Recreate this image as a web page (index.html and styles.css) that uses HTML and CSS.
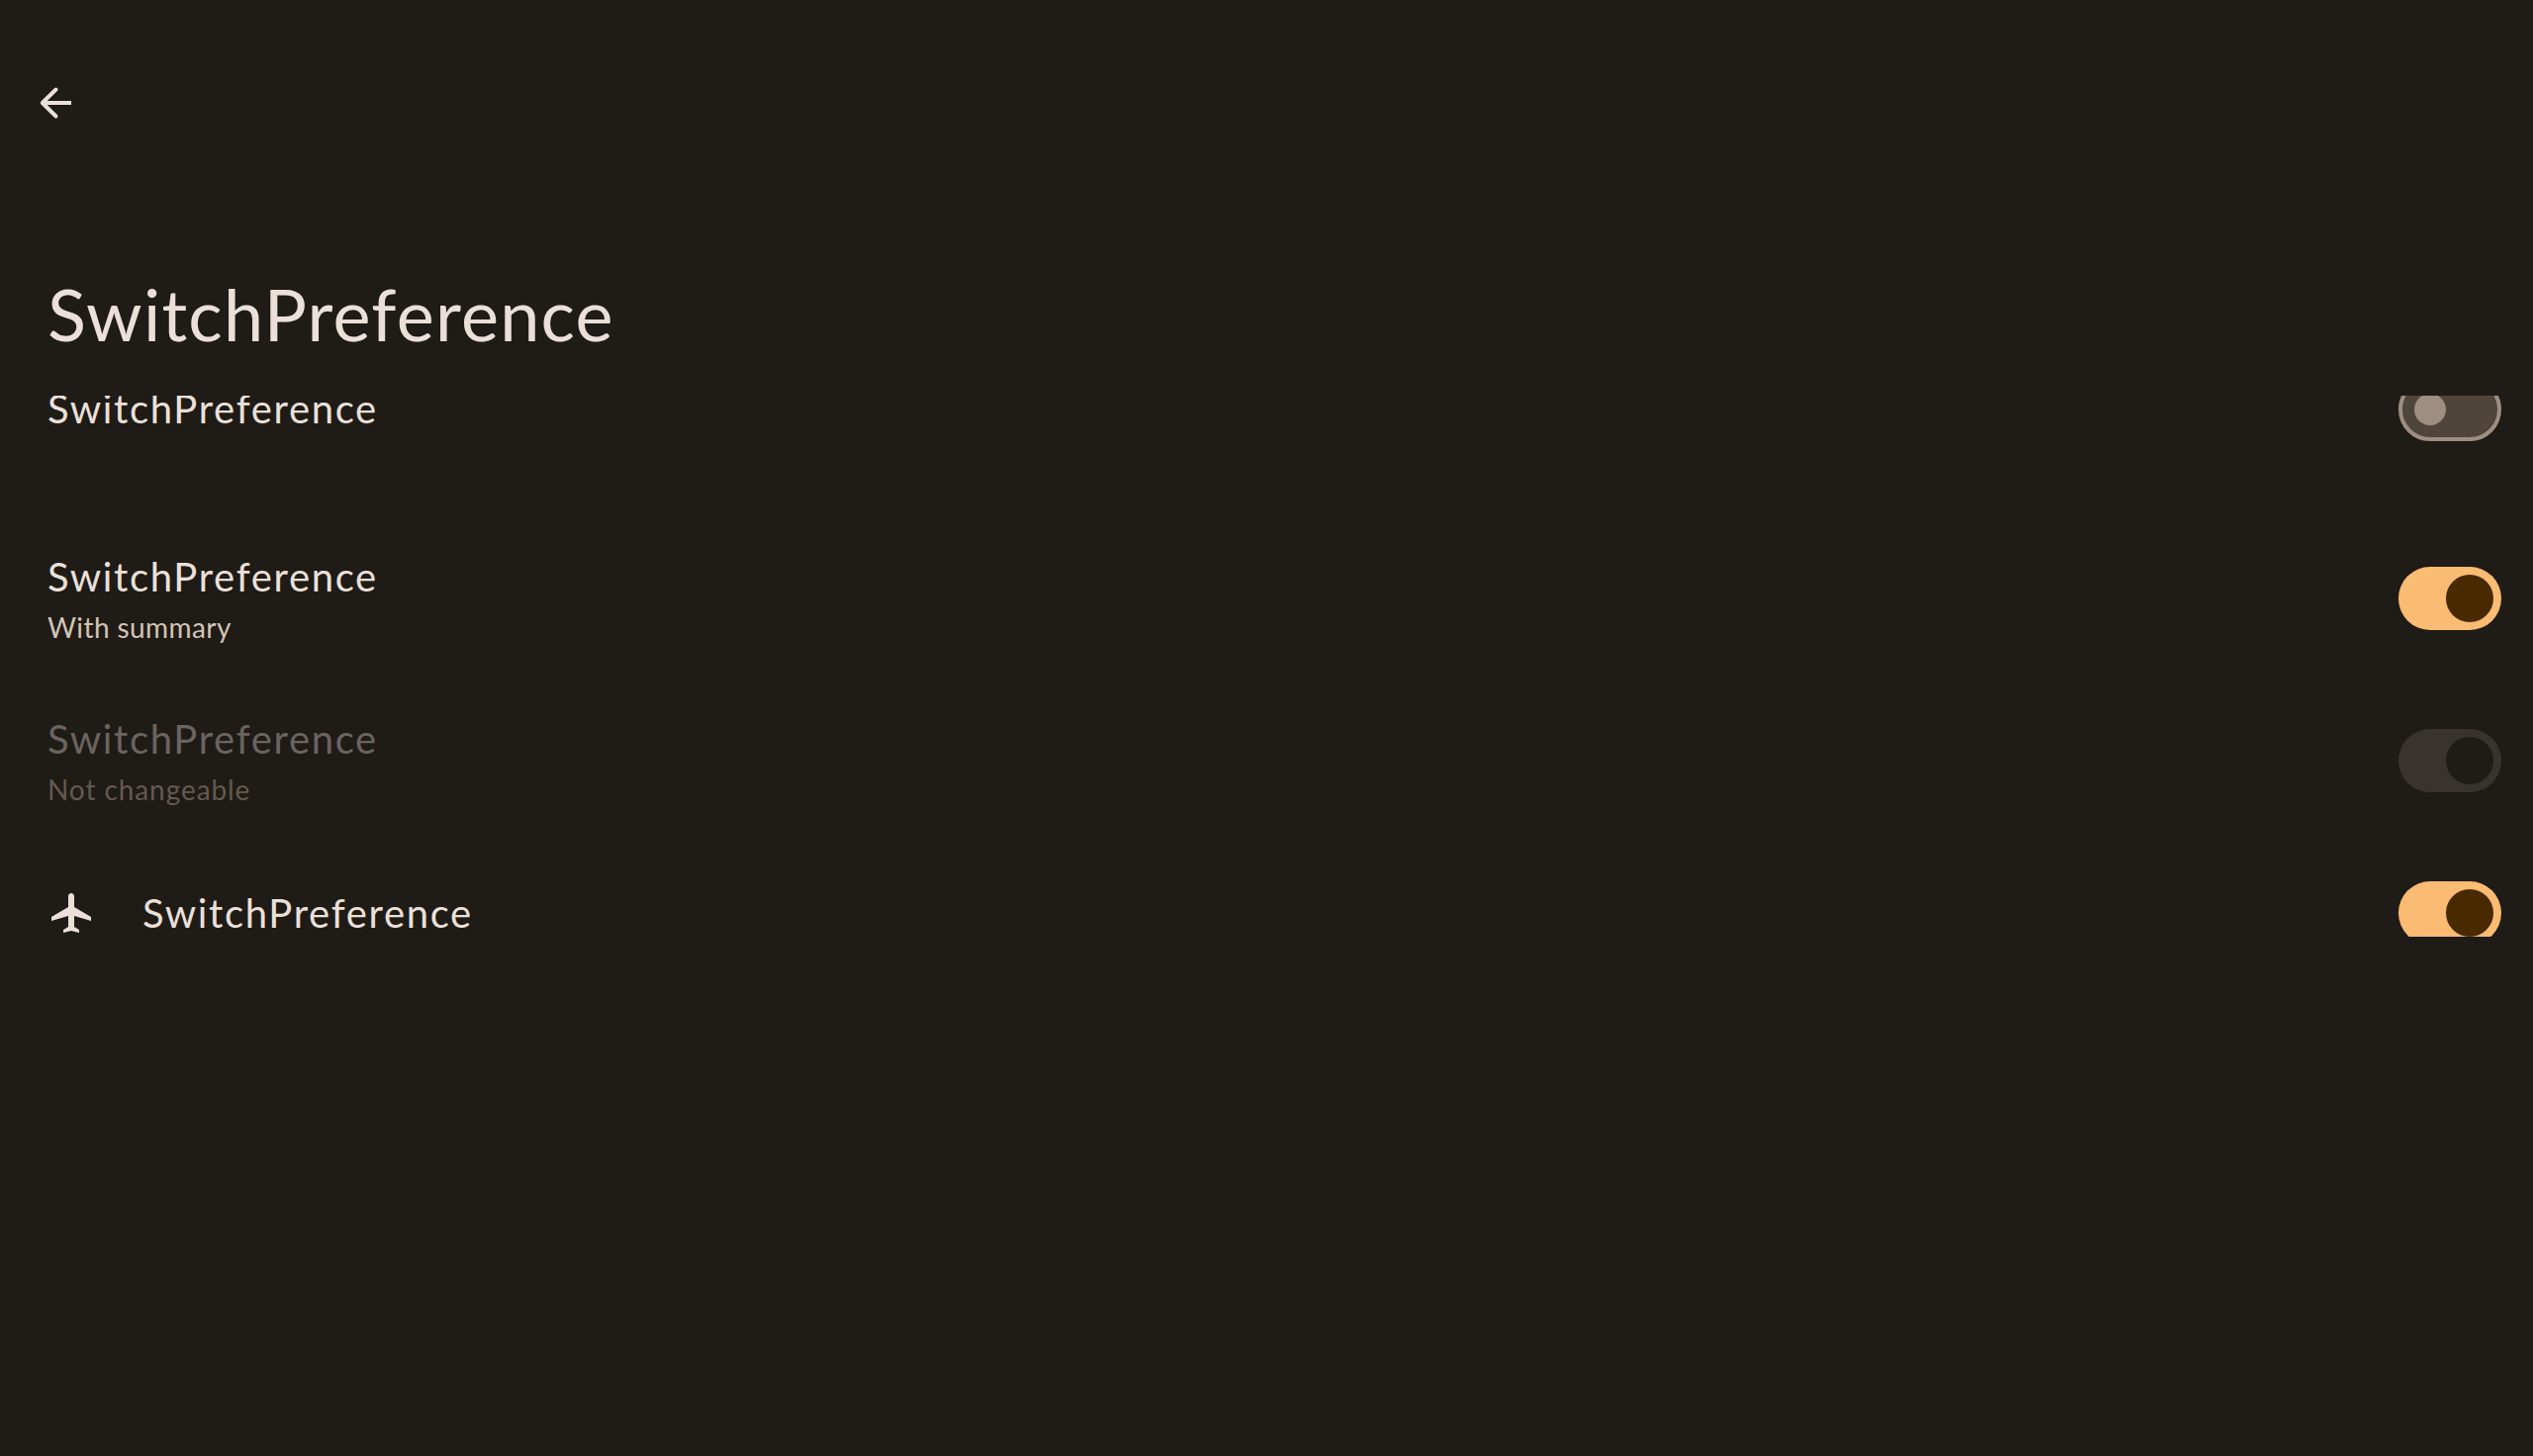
FILE: index.html
```
<!DOCTYPE html>
<html lang="en">
<head>
<meta charset="utf-8">
<title>SwitchPreference</title>
<link rel="stylesheet" href="styles.css">
</head>
<body>
<header class="toolbar">
  <button class="back" aria-label="Back">
    <svg viewBox="0 0 48 48" fill="none" stroke="currentColor" stroke-width="4"><path d="M10.500 24H40"/><path d="M24.500 10.500 10.800 24 24.500 37.500" stroke-linecap="round" stroke-linejoin="round"/></svg>
  </button>
  <h1 class="page-title">SwitchPreference</h1>
</header>
<main class="list">
  <div class="row row-tall">
    <div class="texts"><div class="title">SwitchPreference</div></div>
    <span class="switch" role="switch" aria-checked="false"><span class="thumb"></span></span>
  </div>
  <div class="row">
    <div class="texts"><div class="title">SwitchPreference</div><div class="summary">With summary</div></div>
    <span class="switch on" role="switch" aria-checked="true"><span class="thumb"></span></span>
  </div>
  <div class="row disabled">
    <div class="texts"><div class="title">SwitchPreference</div><div class="summary">Not changeable</div></div>
    <span class="switch on" role="switch" aria-checked="true"><span class="thumb"></span></span>
  </div>
  <div class="row row-short">
    <svg class="plane" viewBox="0 0 24 24" fill="currentColor"><path d="M22 16v-2l-8.500-5V3.500C13.500 2.670 12.830 2 12 2s-1.500.67-1.500 1.500V9L2 14v2l8.500-2.500V19L8 20.500V22l4-1 4 1v-1.500L13.500 19v-5.500z"/></svg>
    <div class="texts"><div class="title">SwitchPreference</div></div>
    <span class="switch on" role="switch" aria-checked="true"><span class="thumb"></span></span>
  </div>
</main>
</body>
</html>
```
FILE: styles.css
```
* { box-sizing: border-box; }
body {
  margin: 0;
  height: 1472px;
  overflow: hidden;
  background: #1f1b16;
  color: #ebe0d9;
  font-family: Lato, sans-serif;
}
.toolbar {
  height: 400px;
  padding: 80px 32px 0;
}
.back {
  display: block;
  width: 48px;
  height: 48px;
  padding: 0;
  border: 0;
  background: none;
  color: inherit;
}
.back svg { display: block; width: 48px; height: 48px; }
.page-title {
  margin: 143px 0 0 16px;
  font-size: 72px;
  line-height: 92px;
  font-weight: 400;
  letter-spacing: 1.25px;
}
.list {
  height: 547px;
  overflow: hidden;
  display: flex;
  flex-direction: column;
}
.row {
  flex: none;
  height: 164px;
  padding: 0 32px 0 48px;
  display: flex;
  align-items: center;
}
.row-tall { height: 218px; margin-top: -95px; }
.row-tall .texts { padding-bottom: 3px; }
.row-short { height: 144px; }
.row-short .texts { padding-bottom: 1px; }
.texts { flex: 1; }
.title { font-size: 40px; line-height: 48px; letter-spacing: 1.67px; }
.summary {
  margin-top: 8px;
  font-size: 28px;
  line-height: 38px;
  letter-spacing: 0.42px;
  color: #d5c3b5;
}
.title:not(:last-child) { margin-top: 1px; }
.plane { width: 48px; height: 48px; margin-right: 48px; }
.switch {
  width: 104px;
  height: 64px;
  padding: 0 12px;
  display: flex;
  align-items: center;
  border: 4px solid #9d8e81;
  border-radius: 32px;
  background: #50453a;
}
.thumb { width: 32px; height: 32px; border-radius: 50%; background: #9d8e81; }
.switch.on {
  justify-content: flex-end;
  padding: 0 8px;
  border: 0;
  background: #fabb73;
}
.switch.on .thumb { width: 48px; height: 48px; background: #482900; }
.disabled .title { color: #6b6360; }
.disabled .summary { color: #65594f; letter-spacing: 0.92px; }
.disabled .switch { background: #38332e; }
.disabled .switch .thumb { background: #1f1b16; }
```
